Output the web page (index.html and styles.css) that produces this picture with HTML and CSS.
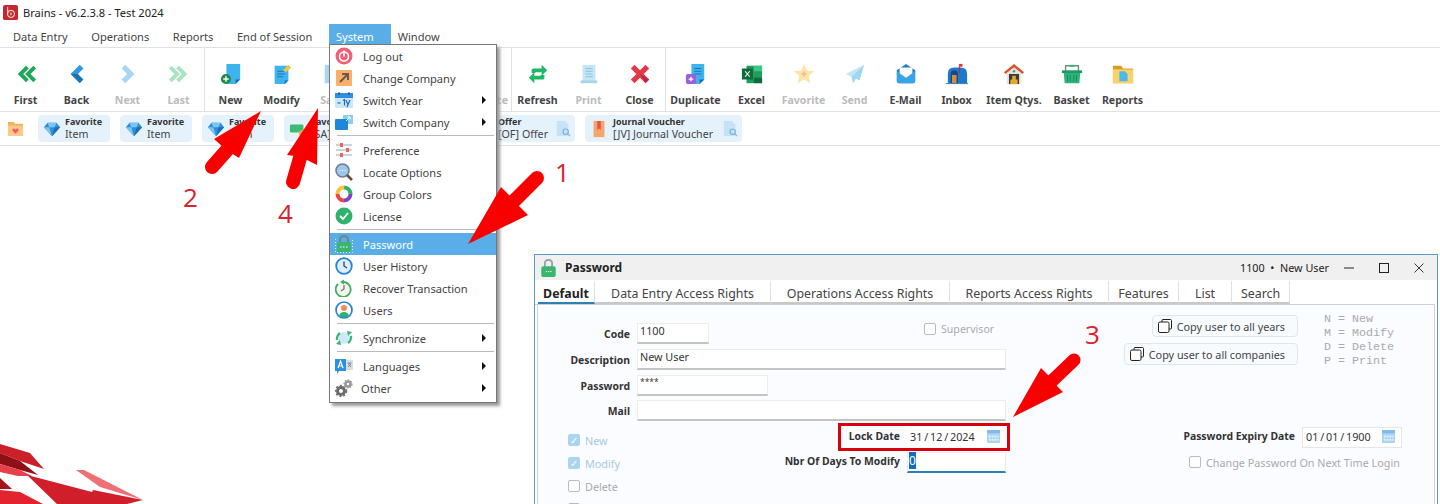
FILE: index.html
```html
<!DOCTYPE html>
<html>
<head>
	<meta charset="utf-8" />
	<title>Brains</title>
	<link rel="stylesheet" href="styles.css">
</head>
<body>
	<svg class="defs" width="0" height="0">
		<symbol id="gem" viewBox="0 0 20 20">
			<path d="M5 3h10l4 5-9 10L1 8z" fill="#2f8fd8"/>
			<path d="M5 3h10l-2 5H7zM1 8h6l3 10z" fill="#7cc4f2"/>
			<path d="M13 8h6l-9 10z" fill="#1d6fb5"/>
		</symbol>
		<symbol id="calendar" viewBox="0 0 14 14">
			<rect width="14" height="14" rx="1" fill="#a9d4f2"/>
			<rect width="14" height="3.500" fill="#7dbce8"/>
			<path d="M2 6h2v2H2zM5 6h2v2H5zM8 6h2v2H8zM11 6h1.500v2H11zM2 9.500h2v2H2zM5 9.500h2v2H5zM8 9.500h2v2H8zM11 9.500h1.500v2H11z" fill="#e6f3fc"/>
		</symbol>
		<symbol id="copy" viewBox="0 0 14 14">
			<path d="M4 3V1.500q0-1 1-1h7.500q1 0 1 1V9q0 1-1 1H11" fill="none" stroke="#222"/>
			<rect x=".5" y="3" width="10.500" height="10.500" rx="1.500" fill="#fff" stroke="#222"/>
		</symbol>
		<symbol id="lens-doc" viewBox="0 0 18 18">
			<path d="M2 0h9l4 4v13H2z" fill="#c5e2f7"/>
			<circle cx="12" cy="12" r="3" fill="none" stroke="#7db4dc" stroke-width="1.300"/>
			<path d="M14 14l3 3" stroke="#7db4dc" stroke-width="1.300"/>
		</symbol>
	</svg>

	<div class="titlebar">
		<svg class="app-logo" viewBox="0 0 16 16"><rect width="16" height="16" rx="2" fill="#c8282d"/><circle cx="8.500" cy="9.500" r="3.800" fill="none" stroke="#fff" stroke-width="1"/><path d="M5 2v8M8.500 8v3" stroke="#fff" fill="none"/></svg>
		<span>Brains - v6.2.3.8 - Test 2024</span>
	</div>

	<nav class="menubar">
		<span class="menubar-item">Data Entry</span>
		<span class="menubar-item">Operations</span>
		<span class="menubar-item">Reports</span>
		<span class="menubar-item">End of Session</span>
		<span class="menubar-item active">System</span>
		<span class="menubar-item">Window</span>
	</nav>

	<div class="toolbar">
		<div class="tool-group">
			<div class="tool"><svg viewBox="0 0 24 24"><path d="M12 3l-9 9 9 9 3-3-6-6 6-6z M20 3l-9 9 9 9 3-3-6-6 6-6z" fill="#1fa85a"/></svg><span>First</span></div>
			<div class="tool"><svg viewBox="0 0 24 24"><path d="M15 2L5 12h8l6-6z" fill="#2f9ae0"/><path d="M5 12l10 10 4-4-6-6z" fill="#1a74b8"/></svg><span>Back</span></div>
			<div class="tool off"><svg viewBox="0 0 24 24"><path d="M9 2l10 10L9 22l-4-4 6-6-6-6z" fill="#a9d6f2"/></svg><span>Next</span></div>
			<div class="tool off"><svg viewBox="0 0 24 24"><path d="M4 3l9 9-9 9-3-3 6-6-6-6z M12 3l9 9-9 9-3-3 6-6-6-6z" fill="#a8e4c2"/></svg><span>Last</span></div>
		</div>
		<div class="tool-group">
			<div class="tool"><svg viewBox="0 0 24 24"><path d="M7 1h15v17l-5 5H7z" fill="#3db4ee"/><path d="M17 23v-5h5z" fill="#1a6fb0"/><circle cx="6.500" cy="17.500" r="5.500" fill="#1e8a4c"/><path d="M6.500 14.500v6M3.500 17.500h6" stroke="#fff" stroke-width="1.500"/></svg><span>New</span></div>
			<div class="tool"><svg viewBox="0 0 24 24"><path d="M4 3h15v16l-4 4H4z" fill="#3db4ee"/><path d="M7 9h8M7 12h8M7 15h6" stroke="#1a6fb0"/><path d="M15 23v-4h4z" fill="#1a6fb0"/><path d="M13 8l6-6 3 3-6 5z" fill="#f3c53b"/></svg><span>Modify</span></div>
			<div class="tool off"><svg viewBox="0 0 24 24"><path d="M3 2h18v20H3z" fill="#a9d6f2"/></svg><span>Save</span></div>
			<div class="tool"></div>
			<div class="tool"></div>
			<div class="tool off"><span class="delete-label">Delete</span></div>
		</div>
		<div class="tool-group last">
			<div class="tool"><svg viewBox="0 0 24 24"><path d="M5 11V8q0-2 2-2h9V2l6 6-6 6v-4H9v1z M19 13v3q0 2-2 2H8v4l-6-6 6-6v4h7v-1z" fill="#1fb864"/></svg><span>Refresh</span></div>
			<div class="tool off"><svg viewBox="0 0 24 24"><path d="M5 2h14v18H5z" fill="#c4e6f6"/><path d="M8 6h8M8 9h8M8 12h8M8 15h8" stroke="#8cc0dc"/><path d="M3 19h18v3H3z" fill="#a6d4ec"/></svg><span>Print</span></div>
			<div class="tool"><svg viewBox="0 0 24 24"><path d="M2 6l4-4 6 6 6-6 4 4-6 6 6 6-4 4-6-6-6 6-4-4 6-6z" fill="#e23a48"/><path d="M12 12l6 10 4-4z" fill="#b52b4a"/></svg><span>Close</span></div>
		</div>
		<div class="tool-group end">
			<div class="tool t-dup"><svg viewBox="0 0 24 24"><path d="M7 1h14v17l-5 5H7z" fill="#3db4ee"/><path d="M10 6h8M10 9h8M10 12h8" stroke="#1a6fb0"/><path d="M16 23v-5h5z" fill="#1a6fb0"/><rect x="1" y="12" width="11" height="11" rx="2" fill="#9a62d8"/><path d="M6.500 15v5M4 17.500h5" stroke="#fff" stroke-width="1.300"/></svg><span>Duplicate</span></div>
			<div class="tool t-excel"><svg viewBox="0 0 24 24"><rect x="6" y="3" width="17" height="19" fill="#1f9e5e"/><path d="M14 3h9v6h-9z" fill="#3cc587"/><path d="M14 16h9v6h-9z" fill="#106b3e"/><rect x="1" y="6" width="12" height="12" fill="#0e6b3a"/><path d="M4.500 9l5 6M9.500 9l-5 6" stroke="#fff" stroke-width="1.200"/></svg><span>Excel</span></div>
			<div class="tool off"><svg viewBox="0 0 24 24"><path d="M12 1l3.300 7.300 7.700.8-5.800 5.200 1.700 7.700L12 18l-6.900 4 1.700-7.700L1 9.100l7.700-.8z" fill="#fbe6a8"/><path d="M12 9v6M9 12h6" stroke="#f4b7a0" stroke-width="1.500"/></svg><span>Favorite</span></div>
			<div class="tool off"><svg viewBox="0 0 24 24"><path d="M22 2L2 12l6 3z" fill="#bfe6f8"/><path d="M22 2L8 15l2 7 3-5 4 2z" fill="#9fd6f2"/></svg><span>Send</span></div>
			<div class="tool"><svg viewBox="0 0 24 24"><path d="M12 1l10 7v12q0 2-2 2H4q-2 0-2-2V8z" fill="#1d7fc4"/><path d="M5 5h14v10l-7 4-7-4z" fill="#fff"/><path d="M2 9l10 7 10-7v11q0 2-2 2H4q-2 0-2-2z" fill="#37a5e6"/></svg><span>E-Mail</span></div>
			<div class="tool"><svg viewBox="0 0 24 24"><path d="M2 12q0-7 7-7h7q7 0 7 7v10H2z" fill="#1f78c8"/><path d="M5 13q0-5 4-5t4 5v9H5z" fill="#12497e"/><path d="M6.500 13h5v9h-5z" fill="#d98b3a"/><path d="M14 1h1v10h-1z" fill="#b5283a"/><path d="M15 1h3v3h-3z" fill="#d8313f"/><path d="M0 22h24v1H0z" fill="#1f78c8"/></svg><span>Inbox</span></div>
			<div class="tool t-qty"><svg viewBox="0 0 24 24"><path d="M12 1L1 10l2 2 9-7 9 7 2-2z" fill="#d9542e"/><path d="M4 11l8-6 8 6v12H4z" fill="#e9e4da"/><circle cx="12" cy="9" r="1.300" fill="#3b8fd0"/><path d="M6.500 12h11v11h-11z" fill="#3a3a3a"/><path d="M8 18h8v5H8zM10 14h4v4h-4z" fill="#e2a92f"/></svg><span>Item Qtys.</span></div>
			<div class="tool"><svg viewBox="0 0 24 24"><path d="M5 9V3h14v6" fill="none" stroke="#6b8f80" stroke-width="1.500"/><path d="M9 2h6v2H9z" fill="#2cb47a"/><path d="M1 8h22v3H1z" fill="#1a9a66"/><path d="M3 11h18l-1 11H4z" fill="#2cb47a"/><path d="M7 13v7M10 13v7M14 13v7M17 13v7" stroke="#168a5a"/></svg><span>Basket</span></div>
			<div class="tool"><svg viewBox="0 0 24 24"><path d="M1 3h9l2 3h11v16H1z" fill="#d99a2c"/><path d="M1 7h22v15H1z" fill="#fad267"/><path d="M8 9h6l3 3v8H8z" fill="#4fb8ea"/></svg><span>Reports</span></div>
		</div>
	</div>

	<div class="favbar">
		<svg class="fav-folder" viewBox="0 0 18 18"><path d="M1 2h6l2 2h8v13H1z" fill="#f5b25c"/><path d="M1 6h16v11H1z" fill="#fbc98a"/><path d="M9 14.500l-3-3q-1-2 1-2.500 1.500 0 2 1.200.5-1.200 2-1.200 2 .5 1 2.500z" fill="#ee5b62"/></svg>
		<div class="fav"><svg class="fav-icon"><use href="#gem"/></svg><div class="fav-text"><b>Favorite</b><span>Item</span></div></div>
		<div class="fav"><svg class="fav-icon"><use href="#gem"/></svg><div class="fav-text"><b>Favorite</b><span>Item</span></div></div>
		<div class="fav"><svg class="fav-icon"><use href="#gem"/></svg><div class="fav-text"><b>Favorite</b><span>Item</span></div></div>
		<div class="fav fav-sales"><svg class="fav-icon" viewBox="0 0 20 20"><rect x="1" y="5" width="15" height="9" rx="1.500" fill="#3dbb74"/><circle cx="15" cy="15" r="4" fill="#f2a65a"/></svg><div class="fav-text"><b>Favorite</b><span>[SA] Sales</span></div></div>
		<div class="fav fav-offer"><div class="fav-text"><b>Offer</b><span>[OF] Offer</span></div><svg class="fav-lens"><use href="#lens-doc"/></svg></div>
		<div class="fav fav-journal"><svg class="fav-icon" viewBox="0 0 20 20"><path d="M4 1h12v18H4z" fill="#f6a66b"/><path d="M8 1h4v10l-2-1.500L8 11z" fill="#e2574c"/></svg><div class="fav-text"><b>Journal Voucher</b><span>[JV] Journal Voucher</span></div><svg class="fav-lens"><use href="#lens-doc"/></svg></div>
	</div>

	<main class="workspace">
		<svg class="watermark" viewBox="0 0 160 84">
			<path d="M0 24l30 9 14 16-24-8-20-8z" fill="#c9202a"/>
			<path d="M0 33l20 8 18 14-18-5-20-6z" fill="#8f0f17"/>
			<path d="M0 44l20 6 12 6-14 0-18-4z" fill="#e8404a"/>
			<path d="M27 55l65 17 1-2 50 10-16 4H57z" fill="#d01f2a"/>
			<path d="M0 58l12 11-12 0z" fill="#a5131b"/>
			<path d="M0 70l20 2 23 12H0z" fill="#e3242e"/>
			<path d="M76 50l8 0 59 30-43-13z" fill="#ef6f77"/>
		</svg>

		<section class="window">
			<header class="window-title">
				<svg class="window-lock" viewBox="0 0 16 20"><path d="M4 9V5q0-4 4-4t4 4v4" fill="none" stroke="#8fa4ad" stroke-width="2"/><rect y="8" width="16" height="12" rx="2" fill="#3cb56c"/><path d="M5 14h1.500M7.500 14H9M10 14h1.500" stroke="#fff"/></svg>
				<b>Password</b>
				<span class="window-user">1100 &nbsp;•&nbsp; New User</span>
				<div class="window-buttons">
					<svg viewBox="0 0 12 12"><path d="M1 6h10" stroke="#222"/></svg>
					<svg viewBox="0 0 12 12"><rect x="1.500" y="1.500" width="9" height="9" fill="none" stroke="#222"/></svg>
					<svg viewBox="0 0 12 12"><path d="M1.500 1.500l9 9M10.500 1.500l-9 9" stroke="#222" stroke-width=".9"/></svg>
				</div>
			</header>
			<div class="tabs">
				<span class="tab current">Default</span>
				<span class="tab t-data">Data Entry Access Rights</span>
				<span class="tab t-ops">Operations Access Rights</span>
				<span class="tab t-rep">Reports Access Rights</span>
				<span class="tab t-feat">Features</span>
				<span class="tab t-list">List</span>
				<span class="tab t-search">Search</span>
			</div>
			<div class="panel">
				<div class="panel-top">
					<div class="fields">
						<div class="row"><label>Code</label><div class="input w-code">1100</div><div class="check supervisor"><i class="box"></i><span>Supervisor</span></div></div>
						<div class="row"><label>Description</label><div class="input w-full">New User</div></div>
						<div class="row"><label>Password</label><div class="input w-pass">****</div></div>
						<div class="row"><label>Mail</label><div class="input w-full"></div></div>
					</div>
					<div class="copy-buttons">
						<div class="copy-btn"><svg><use href="#copy"/></svg>Copy user to all years</div>
						<div class="copy-btn"><svg><use href="#copy"/></svg>Copy user to all companies</div>
					</div>
					<pre class="legend">N = New
M = Modify
D = Delete
P = Print</pre>
				</div>
				<div class="panel-bottom">
					<div class="rights">
						<div class="check on"><i class="box">✓</i><span>New</span></div>
						<div class="check on"><i class="box">✓</i><span>Modify</span></div>
						<div class="check"><i class="box"></i><span>Delete</span></div>
						<div class="check"><i class="box"></i></div>
					</div>
					<div class="lock-col">
						<div class="date-row lock-row"><label>Lock Date</label><div class="date-input">31 / 12 / 2024<svg><use href="#calendar"/></svg></div></div>
						<div class="date-row days-row"><label>Nbr Of Days To Modify</label><div class="days-input"><em>0</em></div></div>
					</div>
					<div class="expiry-col">
						<div class="date-row"><label>Password Expiry Date</label><div class="date-input framed">01 / 01 / 1900<svg><use href="#calendar"/></svg></div></div>
						<div class="check change-pass"><i class="box"></i><span>Change Password On Next Time Login</span></div>
					</div>
				</div>
			</div>
		</section>
	</main>

	<div class="sysmenu">
		<div class="m-item"><svg viewBox="0 0 18 18"><circle cx="9" cy="9" r="8.500" fill="#ef5f78"/><circle cx="9" cy="9.500" r="4.500" fill="none" stroke="#fff" stroke-width="1.600"/><path d="M9 3.500v6" stroke="#fff" stroke-width="1.600"/></svg>Log out</div>
		<div class="m-item"><svg viewBox="0 0 18 18"><rect x="1" y="1" width="16" height="16" rx="1" fill="#f8b06a"/><path d="M5 13l7-7M7 5h6v6" fill="none" stroke="#6b5a4a" stroke-width="2"/></svg>Change Company</div>
		<div class="m-item more"><svg viewBox="0 0 18 18"><rect y="2" width="18" height="15" rx="1" fill="#cbe7fa"/><rect y="2" width="18" height="5" fill="#2f8fe0"/><path d="M4 1v3M14 1v3" stroke="#16456e"/><path d="M2.500 12h3" stroke="#1d6fb5" stroke-width="1.200"/><path d="M8 9.500l1.500-1v6M11 9l2 5M15 9l-3 7" fill="none" stroke="#1d6fb5" stroke-width="1.200"/></svg>Switch Year</div>
		<div class="m-item more"><svg viewBox="0 0 18 18"><rect x="8" y="2" width="10" height="9" fill="#8ccdf5"/><rect y="6" width="13" height="11" rx="1" fill="#1f86d8"/><path d="M11 8l4-4M12.500 4H15v2.500" stroke="#fff" fill="none"/></svg>Switch Company</div>
		<div class="m-sep"></div>
		<div class="m-item"><svg viewBox="0 0 18 18"><path d="M1 4h16M1 9h16M1 14h16" stroke="#c9d4dc" stroke-width="2"/><path d="M5 2h3v4H5zM11 7h3v4h-3zM5 12h3v4H5z" fill="#e2685c"/></svg>Preference</div>
		<div class="m-item"><svg viewBox="0 0 18 18"><circle cx="7.500" cy="7.500" r="6.500" fill="#9cc7ec" stroke="#6d7f92" stroke-width="1.500"/><path d="M12 12l5 5" stroke="#6a4c3a" stroke-width="2.500"/><path d="M4.500 7.500h1M7 7.500h1M9.500 7.500h1" stroke="#fff"/></svg>Locate Options</div>
		<div class="m-item"><svg viewBox="0 0 18 18"><circle cx="9" cy="9" r="6.500" fill="none" stroke="#7c45c6" stroke-width="4" stroke-dasharray="10 31"/><circle cx="9" cy="9" r="6.500" fill="none" stroke="#e84545" stroke-width="4" stroke-dasharray="10 31" stroke-dashoffset="-10"/><circle cx="9" cy="9" r="6.500" fill="none" stroke="#f3c53b" stroke-width="4" stroke-dasharray="10 31" stroke-dashoffset="-20"/><circle cx="9" cy="9" r="6.500" fill="none" stroke="#30b06a" stroke-width="4" stroke-dasharray="11 31" stroke-dashoffset="-30"/></svg>Group Colors</div>
		<div class="m-item"><svg viewBox="0 0 18 18"><circle cx="9" cy="9" r="8.500" fill="#2fb36c"/><path d="M5 9l3 3 5-6" fill="none" stroke="#fff" stroke-width="1.800"/></svg>License</div>
		<div class="m-sep"></div>
		<div class="m-item hot"><svg viewBox="0 0 18 18"><path d="M5 8V5q0-4 4-4t4 4v3" fill="none" stroke="#70858e" stroke-width="2"/><rect x="2" y="7" width="14" height="10" rx="2" fill="#3cb56c"/><path d="M5 12h1.500M8 12h1.500M11 12h1.500" stroke="#fff"/><path d="M.5 4v13.500H17.500V4" fill="none" stroke="#dff1fc" stroke-dasharray="1 2"/></svg>Password</div>
		<div class="m-item"><svg viewBox="0 0 18 18"><circle cx="9" cy="9" r="7.800" fill="#dceefb" stroke="#2383d6" stroke-width="1.800"/><path d="M9 4.500V9l3 2" fill="none" stroke="#33475b" stroke-width="1.300"/></svg>User History</div>
		<div class="m-item"><svg viewBox="0 0 18 18"><path d="M3 5a7.500 7.500 0 1 0 6-2" fill="#f1f7ee" stroke="#45ad6a" stroke-width="1.800"/><path d="M9 .5v5L5 3z" fill="#45ad6a"/><path d="M9 6v4l-3 2" fill="none" stroke="#7a6a55" stroke-width="1.200"/></svg>Recover Transaction</div>
		<div class="m-item"><svg viewBox="0 0 18 18"><circle cx="9" cy="9" r="8" fill="#fff" stroke="#2383d6" stroke-width="1.700"/><circle cx="9" cy="7" r="3" fill="#ef8a5a"/><path d="M4 15q1-4 5-4t5 4q-5 2.500-10 0z" fill="#2fb36c"/></svg>Users</div>
		<div class="m-sep"></div>
		<div class="m-item more"><svg viewBox="0 0 18 18"><circle cx="9" cy="9" r="6" fill="#cfe8fa"/><path d="M2 11a7.500 7.500 0 0 1 3-7M16 7a7.500 7.500 0 0 1-3 7" fill="none" stroke="#35b876" stroke-width="2.200"/><path d="M1 15l5 1-1-5zM17 3l-5-1 1 5z" fill="#35b876"/></svg>Synchronize</div>
		<div class="m-sep"></div>
		<div class="m-item more"><svg viewBox="0 0 18 18"><path d="M0 2h11v12H4l-2 3v-3H0z" fill="#2f8fe0"/><path d="M11 3h7v10h-7z" fill="#d7dde2"/><path d="M3 11l2.500-7 2.500 7M4 9h3" fill="none" stroke="#fff" stroke-width="1.200"/><path d="M12.500 6h4M14.500 6v1M13 10l3-3M13.500 7l2.500 3" stroke="#5f6b75" stroke-width=".7" fill="none"/></svg>Languages</div>
		<div class="m-item more other"><svg viewBox="0 0 18 18"><circle cx="6" cy="12" r="3.500" fill="none" stroke="#6b6b6b" stroke-width="3"/><circle cx="6" cy="12" r="5.500" fill="none" stroke="#6b6b6b" stroke-width="1.500" stroke-dasharray="2 2"/><circle cx="13" cy="5" r="2.500" fill="none" stroke="#999" stroke-width="2.500"/><circle cx="13" cy="5" r="4" fill="none" stroke="#999" stroke-width="1.200" stroke-dasharray="1.500 1.500"/></svg>Other</div>
	</div>

	<svg class="arrows" viewBox="0 0 1440 504">
		<path d="M468 244L501 187 510 196 519 206 528 215z" fill="#f80000"/>
		<path d="M514 201L537 178" stroke="#f80000" stroke-width="14" stroke-linecap="round"/>
		<path d="M261 111L214 139 223 147 231 153 239 158z" fill="#f80000"/>
		<path d="M227 150L212 167" stroke="#f80000" stroke-width="14" stroke-linecap="round"/>
		<path d="M318 108L287 155 295 156 307 160 317 165z" fill="#f80000"/>
		<path d="M300 158L293 182" stroke="#f80000" stroke-width="14" stroke-linecap="round"/>
		<path d="M1013 417L1041 368 1049 376 1056 385 1063 392z" fill="#f80000"/>
		<path d="M1052 381L1074 360" stroke="#f80000" stroke-width="13" stroke-linecap="round"/>
	</svg>
	<span class="num n1">1</span>
	<span class="num n2">2</span>
	<span class="num n3">3</span>
	<span class="num n4">4</span>
</body>
</html>
```

FILE: styles.css
```css
html,body{
	margin: 0;
	height: 504px;
	overflow: hidden;
	background-color: #fff;
}
body{
	position: relative;
	width: 1440px;
	display: flex;
	flex-direction: column;
	font-family: "Noto Sans", "Open Sans", sans-serif;
	font-size: 11.100px;
	color: #333;
}
.defs{
	position: absolute;
}

/* title + menu */
.titlebar{
	height: 24px;
	display: flex;
	align-items: center;
	padding-left: 3px;
	gap: 5px;
	color: #222;
	flex: none;
}
.app-logo{
	width: 15px;
	height: 15px;
}
.menubar{
	height: 20px;
	display: flex;
	padding-left: 6px;
	flex: none;
	border-bottom: 3px solid #fff;
	box-shadow: 0 1px 0 #e2e2e2;
}
.menubar-item{
	padding: 0 7px;
	margin-right: 9.500px;
	line-height: 25px;
	height: 20px;
	color: #444;
}
.menubar-item.active{
	background-color: #5aaee8;
	color: #fff;
	margin-right: 0;
	padding-right: 17px;
}

/* toolbar */
.toolbar{
	height: 65px;
	display: flex;
	flex: none;
	border-bottom: 1px solid #e2e2e2;
	box-sizing: border-box;
}
.tool-group{
	display: flex;
	border-right: 1px solid #e2e2e2;
}
.tool-group.end{
	border-right: 0;
}
.tool{
	width: 51px;
	display: flex;
	flex-direction: column;
	align-items: center;
	font-size: 10.600px;
	font-weight: 700;
	color: #444;
	padding-top: 16px;
	box-sizing: border-box;
	position: relative;
}
.tool svg{
	width: 22px;
	height: 22px;
}
.tool span{
	position: absolute;
	top: 46px;
	white-space: nowrap;
}
.tool .delete-label{
	left: 12px;
	letter-spacing: .3px;
}
.tool.off{
	color: #bbb;
}
.t-dup{
	width: 59px;
}
.t-excel{
	width: 53px;
}
.t-qty{
	width: 64px;
}

/* favorites */
.favbar{
	height: 34px;
	flex: none;
	display: flex;
	align-items: center;
	gap: 10px;
	padding-left: 7px;
	border-bottom: 1px solid #e2e2e2;
	box-sizing: border-box;
}
.fav-folder{
	width: 17px;
	height: 17px;
	margin-right: 4px;
}
.fav{
	width: 72px;
	height: 27px;
	border-radius: 4px;
	background-color: #e6f2fb;
	display: flex;
	align-items: center;
	padding: 0 4px 0 5px;
	box-sizing: border-box;
	gap: 4px;
	flex: none;
}
.fav-sales{
	width: 168px;
}
.fav-offer{
	width: 113px;
	padding-left: 36px;
}
.fav-journal{
	width: 157px;
	gap: 5px;
}
.fav-icon{
	width: 18px;
	height: 18px;
	flex: none;
}
.fav-lens{
	width: 16px;
	height: 18px;
	flex: none;
	margin-left: auto;
}
.fav-text{
	display: flex;
	flex-direction: column;
	line-height: 12px;
	white-space: nowrap;
	color: #444;
	font-size: 10.700px;
	margin-top: -1px;
}
.fav-text b{
	font-size: 9px;
	color: #333;
}

/* work area */
.workspace{
	flex: 1;
	position: relative;
	overflow: hidden;
}
.watermark{
	position: absolute;
	left: 0;
	bottom: 0;
	width: 160px;
	height: 84px;
}
.window{
	position: absolute;
	left: 534px;
	top: 108px;
	width: 904px;
	height: 300px;
	box-sizing: border-box;
	border: 1px solid #5a9cc5;
	background-color: #fff;
}
.window-title{
	height: 25px;
	background-color: #f0f0f0;
	display: flex;
	align-items: center;
	padding-left: 6px;
	color: #222;
	font-size: 12px;
}
.window-lock{
	width: 15px;
	height: 18px;
	margin-right: 9px;
}
.window-user{
	margin-left: auto;
	margin-right: 14px;
	font-size: 10.800px;
}
.window-buttons{
	display: flex;
	gap: 23px;
	padding-right: 12px;
}
.window-buttons svg{
	width: 12px;
	height: 12px;
}
.tabs{
	display: flex;
	height: 24px;
	padding-left: 3px;
	box-sizing: border-box;
	margin-top: 1px;
	margin-right: 2px;
	border-bottom: 1px solid #c9d2d8;
	font-size: 12.400px;
}
.tab{
	text-align: center;
	line-height: 25px;
	height: 23px;
	box-sizing: border-box;
	border-right: 1px solid #e0e0e0;
	border-bottom: 2px solid #c8c8c8;
	color: #444;
	flex: none;
}
.tab.current{
	width: 57px;
	font-weight: 700;
	color: #222;
	border-bottom-color: #2f7fb0;
}
.t-data{ width: 176px; }
.t-ops{ width: 179px; }
.t-rep{ width: 159px; }
.t-feat{ width: 70px; }
.t-list{ width: 53px; }
.t-search{ width: 58px; }
.panel{
	margin-left: 2px;
	margin-right: 2px;
	height: 250px;
	border-left: 1px solid #c9d2d8;
	border-right: 1px solid #c9d2d8;
	background-color: #fbfcff;
	box-sizing: border-box;
	font-size: 10.800px;
}
.panel-top{
	display: flex;
	height: 118px;
}
.fields{
	width: 468px;
	padding-top: 18px;
	flex: none;
}
.row{
	display: flex;
	align-items: center;
	height: 21px;
	margin-bottom: 5px;
}
.row:nth-child(3){
	margin-bottom: 4px;
}
.row label{
	width: 92px;
	text-align: right;
	font-weight: 700;
	font-size: 10.400px;
	color: #333;
	margin-right: 7px;
	flex: none;
}
.input{
	height: 21px;
	box-sizing: border-box;
	background-color: #fff;
	border: 1px solid #ececec;
	border-bottom: 2px solid #c4c4c4;
	padding-left: 2px;
	line-height: 14px;
	color: #333;
}
.w-code{ width: 72px; }
.w-full{ width: 369px; }
.w-pass{
	width: 131px;
	font-size: 8.500px;
	line-height: 11px;
}
.check{
	display: flex;
	align-items: center;
	gap: 5px;
	color: #aaa;
	white-space: nowrap;
}
.box{
	width: 12px;
	height: 12px;
	box-sizing: border-box;
	border: 1px solid #bbb;
	border-radius: 2px;
	background-color: #fff;
	font-style: normal;
	font-size: 10px;
	line-height: 10px;
	text-align: center;
	color: #fff;
	flex: none;
}
.check.on .box{
	background-color: #a9d4f2;
	border-color: #a9d4f2;
}
.check.on span{
	color: #a9c8e0;
}
.supervisor{
	margin-left: 215px;
	margin-top: -9px;
	font-size: 10.600px;
}
.copy-buttons{
	width: 292px;
	flex: none;
	display: flex;
	flex-direction: column;
	align-items: flex-end;
	gap: 6px;
	padding-top: 10px;
}
.copy-btn{
	height: 22px;
	box-sizing: border-box;
	border: 1px solid #dfe6ec;
	border-radius: 4px;
	background-color: #f7fbfe;
	display: flex;
	align-items: center;
	padding: 0 12px 0 5px;
	gap: 5px;
	color: #444;
}
.copy-btn svg{
	width: 14px;
	height: 14px;
}
.legend{
	margin: 0;
	padding: 7px 0 0 26px;
	font-family: "Liberation Mono", monospace;
	font-size: 11.700px;
	line-height: 14px;
	color: #aaa;
}
.panel-bottom{
	display: flex;
}
.rights{
	width: 242px;
	flex: none;
	padding: 9px 0 0 30px;
	box-sizing: border-box;
	display: flex;
	flex-direction: column;
	gap: 7px;
}
.rights .check{
	height: 16px;
}
.lock-col{
	width: 226px;
	flex: none;
}
.date-row{
	display: flex;
	align-items: center;
	justify-content: flex-end;
	height: 24px;
	gap: 7px;
}
.date-row label{
	font-weight: 700;
	font-size: 10.400px;
	color: #333;
	white-space: nowrap;
	padding-bottom: 3px;
}
.lock-row{
	border: 3px solid #d8000c;
	width: 172px;
	height: 28px;
	margin-left: auto;
	margin-right: -4px;
	padding-right: 1px;
	box-sizing: border-box;
}
.days-row{
	height: 21px;
	margin-top: 1px;
}
.date-input{
	width: 99px;
	height: 21px;
	box-sizing: border-box;
	display: flex;
	align-items: center;
	justify-content: space-between;
	padding: 0 6px 1px 3px;
	background-color: #fff;
	color: #333;
	word-spacing: -1px;
	flex: none;
}
.date-input svg{
	width: 13px;
	height: 13px;
}
.framed{
	width: 100px;
	border: 1px solid #e6e6e6;
}
.days-input{
	width: 99px;
	height: 21px;
	box-sizing: border-box;
	background-color: #fff;
	border: 1px solid #ececec;
	border-bottom: 2px solid #2f7fb0;
	padding-left: 1px;
	line-height: 15px;
	font-size: 12px;
	flex: none;
}
.days-input em{
	font-style: normal;
	background-color: #0f6fc6;
	color: #fff;
}
.expiry-col{
	width: 396px;
	flex: none;
	padding-top: 2px;
}
.change-pass{
	margin: 5px 0 0 183px;
	height: 16px;
}

/* system menu, over everything */
.sysmenu{
	position: absolute;
	left: 329px;
	top: 44px;
	width: 168px;
	height: 359px;
	box-sizing: border-box;
	border: 1px solid #777;
	background-color: #fff;
	box-shadow: 3px 3px 3px #999;
	color: #444;
}
.m-item{
	height: 22px;
	display: flex;
	align-items: center;
	padding-left: 5px;
	gap: 10px;
	position: relative;
}
.m-item svg{
	width: 18px;
	height: 18px;
	flex: none;
}
.m-item.hot{
	background-color: #5aaee8;
	color: #fff;
}
.m-item.more::after{
	content: "";
	position: absolute;
	right: 10px;
	top: 7px;
	border-left: 4px solid #111;
	border-top: 4px solid transparent;
	border-bottom: 4px solid transparent;
}
.m-item.other{
	gap: 8px;
}
.m-sep{
	height: 1px;
	background-color: #bbb;
	margin: 2px 2px 3px 7px;
}

/* annotations */
.arrows{
	position: absolute;
	left: 0;
	top: 0;
	width: 1440px;
	height: 504px;
	pointer-events: none;
}
.num{
	position: absolute;
	font-family: "Open Sans", sans-serif;
	font-size: 26px;
	line-height: 26px;
	color: #d8232a;
}
.n1{ left: 555px; top: 159px; }
.n2{ left: 183px; top: 184px; }
.n3{ left: 1085px; top: 321px; }
.n4{ left: 278px; top: 200px; }
```
